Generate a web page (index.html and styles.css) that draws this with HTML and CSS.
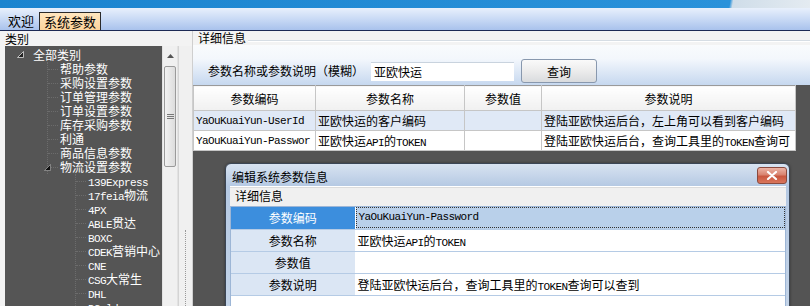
FILE: index.html
```html
<!DOCTYPE html>
<html lang="zh-CN">
<head>
  <meta charset="UTF-8">
  <title>系统参数</title>
  <link rel="stylesheet" href="styles.css">
</head>
<body>
  <div class="banner"></div>
  <div class="tabbar">
    <div class="tab">欢迎</div>
    <div class="tab active">系统参数</div>
  </div>

  <div class="main">
    <div class="left">
      <div class="cap">类别</div>
      <div class="tree-box">
        <div class="tree">
          <div class="node root"><span class="tw"><svg width="7" height="7" viewBox="0 0 7 7"><polygon points="6.5,0.5 6.5,6.5 0.5,6.5" fill="#222" stroke="#ddd" stroke-width="0.8"/></svg></span>全部类别</div>
          <div class="kids k1">
            <div class="node">帮助参数</div>
            <div class="node">采购设置参数</div>
            <div class="node">订单管理参数</div>
            <div class="node">订单设置参数</div>
            <div class="node">库存采购参数</div>
            <div class="node">利通</div>
            <div class="node">商品信息参数</div>
            <div class="node last"><span class="tw"><svg width="7" height="7" viewBox="0 0 7 7"><polygon points="6.5,0.5 6.5,6.5 0.5,6.5" fill="#111" stroke="#bbb" stroke-width="0.6"/></svg></span>物流设置参数</div>
          </div>
          <div class="kids k2">
            <div class="node"><span class="lat">139Express</span></div>
            <div class="node"><span class="lat">17feia</span>物流</div>
            <div class="node"><span class="lat">4PX</span></div>
            <div class="node"><span class="lat">ABLE</span>贯达</div>
            <div class="node"><span class="lat">BOXC</span></div>
            <div class="node"><span class="lat">CDEK</span>营销中心</div>
            <div class="node"><span class="lat">CNE</span></div>
            <div class="node"><span class="lat">CSG</span>大常生</div>
            <div class="node"><span class="lat">DHL</span></div>
            <div class="node"><span class="lat">DGoldex</span></div>
          </div>
        </div>
        <div class="vscroll">
          <div class="up"><svg width="7" height="4" viewBox="0 0 7 4"><polygon points="0,4 3.5,0 7,4" fill="#555"/></svg></div>
          <div class="thumb"><span class="grip"></span></div>
        </div>
        <div class="splitter"><div class="dots"></div></div>
      </div>
    </div>

    <div class="right">
      <div class="cap2"><span>详细信息</span><i class="rule"></i></div>
      <div class="search">
        <span class="lbl">参数名称或参数说明（模糊）</span>
        <div class="input">亚欧快运</div>
        <button class="btn">查询</button>
      </div>
      <div class="grid-area">
        <table class="grid">
          <colgroup><col style="width:122px"><col style="width:149px"><col style="width:77px"><col></colgroup>
          <tr><th>参数编码</th><th>参数名称</th><th>参数值</th><th>参数说明</th></tr>
          <tr class="sel"><td class="code">YaOuKuaiYun-UserId</td><td>亚欧快运的客户编码</td><td></td><td>登陆亚欧快运后台，左上角可以看到客户编码</td></tr>
          <tr><td class="code">YaOuKuaiYun-Passwor</td><td>亚欧快运<span class="lat">API</span>的<span class="lat">TOKEN</span></td><td></td><td>登陆亚欧快运后台，查询工具里的<span class="lat">TOKEN</span>查询可</td></tr>
        </table>
      </div>
    </div>
  </div>

  <div class="dialog">
    <div class="dlg-title">
      <span>编辑系统参数信息</span>
      <div class="close"><svg width="12" height="9" viewBox="0 0 12 9"><path d="M2 1 L10 8 M10 1 L2 8" stroke="#fff" stroke-width="2.2" stroke-linecap="round"/></svg></div>
    </div>
    <div class="dlg-body">
      <div class="dlg-sub">详细信息</div>
      <div class="props-box">
        <table class="props">
          <colgroup><col style="width:124px"><col></colgroup>
          <tr class="cur"><th>参数编码</th><td class="code"><div class="focus">YaOuKuaiYun-Password</div></td></tr>
          <tr><th>参数名称</th><td>亚欧快运<span class="lat">API</span>的<span class="lat">TOKEN</span></td></tr>
          <tr><th>参数值</th><td></td></tr>
          <tr><th>参数说明</th><td>登陆亚欧快运后台，查询工具里的<span class="lat">TOKEN</span>查询可以查到</td></tr>
        </table>
      </div>
    </div>
  </div>
</body>
</html>
```

FILE: styles.css
```css
* { box-sizing: border-box; }
body { margin: 0; width: 810px; height: 306px; overflow: hidden; position: relative; background: #f3f3f3; font-family: "Noto Sans CJK SC", "Liberation Sans", sans-serif; font-size: 12px; color: #000; }
.lat, .code { font-family: "Liberation Mono", monospace; font-size: 11px; letter-spacing: -0.6px; }

.banner { height: 8px; background: linear-gradient(100deg, #1b84cf 0, #2a92da 90%, #cfdde9 90.4%, #e4ebf1 100%); }
.tabbar { height: 23px; display: flex; align-items: flex-end; padding-left: 3px; background: linear-gradient(#e8f0fc, #c9daf5 50%, #a9c2ec); border-bottom: 1px solid #1d2a55; }
.tab { height: 18px; line-height: 17px; padding: 0 5px; font-size: 13px; }
.tab.active { background: linear-gradient(#ffe6bf, #fcd39b); border: 1px solid #2a2a2a; border-bottom: none; padding: 0 4px; }

.main { display: flex; height: 275px; }
.left { width: 192px; display: flex; flex-direction: column; }
.cap { height: 16px; line-height: 15px; padding-left: 5px; }
.tree-box { flex: 1; display: flex; padding-left: 5px; }
.tree { width: 157px; background: #555; color: #fff; padding-top: 2px; overflow: hidden; }
.node { height: 14px; line-height: 14px; white-space: nowrap; position: relative; }
.root { padding-left: 28px; }
.tw { position: absolute; top: 3px; line-height: 0; }
.root .tw { left: 12px; }
.kids { border-left: 1px dotted #6c6c6c; }
.k1 { margin-left: 42px; }
.k2 { margin-left: 70px; }
.kids .node { padding-left: 12px; }
.kids .node::before { content: ""; position: absolute; left: 0; top: 7px; width: 10px; border-top: 1px dotted #6c6c6c; }
.k1 .last .tw { left: -4px; top: 4px; }

.vscroll { width: 16px; background: #f0f0f0; border-left: 1px solid #e2e2e2; border-right: 1px solid #e2e2e2; }
.up { height: 20px; display: flex; justify-content: center; align-items: center; }
.thumb { height: 101px; margin: 0 1px; border: 1px solid #9a9a9a; border-radius: 2px; background: linear-gradient(90deg, #f2f2f2, #dcdcdc); display: flex; justify-content: center; align-items: center; }
.grip { width: 7px; height: 5px; border-top: 1px solid #777; border-bottom: 1px solid #777; position: relative; }
.grip::after { content: ""; position: absolute; left: 0; right: 0; top: 1px; border-top: 1px solid #777; }
.splitter { width: 14px; border-left: 1px solid #d4d4d4; background: #f0f0f0; padding-left: 6px; }
.dots { margin-top: 184px; width: 1px; height: 80px; border-left: 1px dotted #999; }

.right { flex: 1; display: flex; flex-direction: column; border-left: 1px solid #cfcfcf; }
.cap2 { height: 14px; display: flex; align-items: center; padding-left: 5px; }
.cap2 span { line-height: 14px; padding-right: 2px; }
.rule { flex: 1; height: 2px; border-top: 1px solid #d6dde4; border-bottom: 1px solid #fff; margin-top: 5px; }
.search { height: 40px; display: flex; align-items: center; padding: 12px 0 0 15px; background: linear-gradient(#f9fbfd, #f3f7fc 35%, #c6d8ef); }
.lbl { line-height: 16px; }
.input { width: 143px; height: 19px; line-height: 18px; margin-left: 7px; padding-left: 3px; background: #fff; border-top: 1px solid #c9d3de; }
.btn { width: 76px; height: 24px; margin-left: 7px; font: inherit; border: 1px solid #8898ae; border-radius: 3px; background: linear-gradient(#fafafa, #ececec 50%, #d9dbde); padding: 0; }

.grid-area { flex: 1; background: #545454; }
.grid { width: 603px; border-collapse: collapse; table-layout: fixed; background: #fff; }
.grid th { height: 25px; font-weight: normal; background: linear-gradient(#fff, #f0f0f0); border: 1px solid #c6c6c6; border-top-color: #9a9a9a; }
.grid td { height: 20px; padding: 0 2px; border: 1px solid #c6c6c6; white-space: nowrap; overflow: hidden; }
.grid .sel td { background: #e0e9f6; }

.dialog { position: absolute; left: 225px; top: 163px; width: 565px; height: 150px; border: 1px solid #3b4656; border-radius: 6px 6px 0 0; background: linear-gradient(#d8e3f1, #b5c9e3 22px, #c4d4e8); padding: 0 3px 0 4px; box-shadow: 0 0 3px rgba(0,0,0,.4); }
.dlg-title { height: 22px; display: flex; align-items: center; justify-content: space-between; padding-left: 2px; }
.dlg-title span { line-height: 14px; margin-top: 4px; }
.close { width: 30px; height: 17px; margin-right: -1px; border: 1px solid #8a4a3e; border-radius: 3px; background: linear-gradient(#ecb4a6, #d98470 45%, #c9573f 55%, #d9765c); display: flex; justify-content: center; align-items: center; }
.dlg-body { background: #f0f0f0; border-top: 1px solid #fff; height: 130px; }
.dlg-sub { height: 19px; line-height: 15px; padding-left: 5px; border-top: 1px solid #dcdcdc; }
.props-box { height: 110px; background: #fff; border: 1px solid #9db6d6; border-bottom: none; }
.props { width: 554px; border-collapse: collapse; table-layout: fixed; }
.props th { height: 22px; font-weight: normal; background: #dbe6f4; border-bottom: 1px solid #b5cbe5; border-right: 1px solid #fff; }
.props td { height: 22px; padding: 0 2px; border-bottom: 1px solid #b5cbe5; white-space: nowrap; }
.props .cur th { background: #3c8edd; color: #fff; }
.props .cur td { background: #b9d0ea; padding: 0; }
.focus { height: 21px; line-height: 19px; padding-left: 2px; border: 1px dotted #333; }
```
